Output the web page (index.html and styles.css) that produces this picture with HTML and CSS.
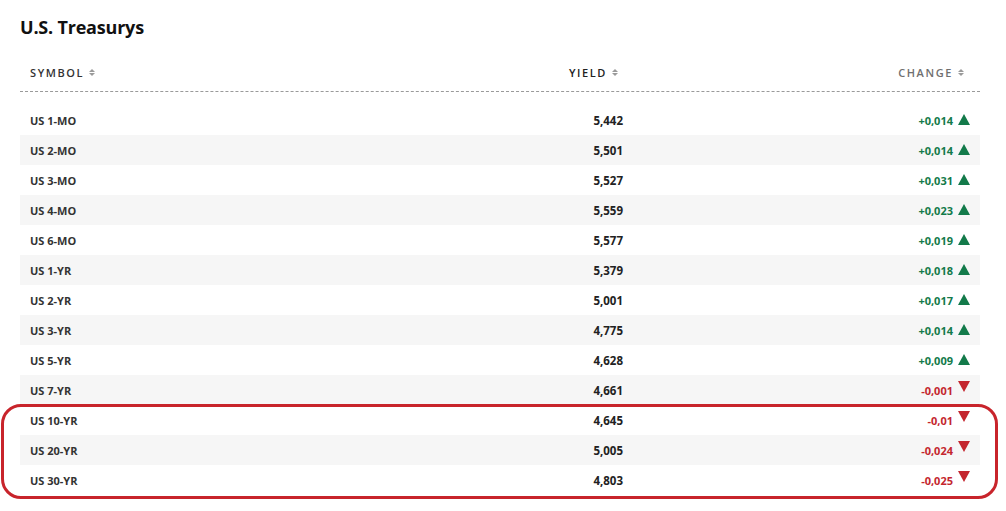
FILE: index.html
```html
<!DOCTYPE html>
<html>
<head>
<meta charset="utf-8">
<link rel="stylesheet" href="styles.css">
</head>
<body>
<div class="page">
  <h1 class="title">U.S. Treasurys</h1>
  <div class="table">
    <div class="row head">
      <div class="c sym">SYMBOL <span class="sort"><i class="su"></i><i class="sd"></i></span></div>
      <div class="c yld">YIELD <span class="sort"><i class="su"></i><i class="sd"></i></span></div>
      <div class="c chg">CHANGE <span class="sort"><i class="su"></i><i class="sd"></i></span></div>
    </div>
    <div class="row"><div class="c sym">US 1-MO</div><div class="c yld">5,442</div><div class="c chg up">+0,014 <i class="tri-up"></i></div></div>
    <div class="row alt"><div class="c sym">US 2-MO</div><div class="c yld">5,501</div><div class="c chg up">+0,014 <i class="tri-up"></i></div></div>
    <div class="row"><div class="c sym">US 3-MO</div><div class="c yld">5,527</div><div class="c chg up">+0,031 <i class="tri-up"></i></div></div>
    <div class="row alt"><div class="c sym">US 4-MO</div><div class="c yld">5,559</div><div class="c chg up">+0,023 <i class="tri-up"></i></div></div>
    <div class="row"><div class="c sym">US 6-MO</div><div class="c yld">5,577</div><div class="c chg up">+0,019 <i class="tri-up"></i></div></div>
    <div class="row alt"><div class="c sym">US 1-YR</div><div class="c yld">5,379</div><div class="c chg up">+0,018 <i class="tri-up"></i></div></div>
    <div class="row"><div class="c sym">US 2-YR</div><div class="c yld">5,001</div><div class="c chg up">+0,017 <i class="tri-up"></i></div></div>
    <div class="row alt"><div class="c sym">US 3-YR</div><div class="c yld">4,775</div><div class="c chg up">+0,014 <i class="tri-up"></i></div></div>
    <div class="row"><div class="c sym">US 5-YR</div><div class="c yld">4,628</div><div class="c chg up">+0,009 <i class="tri-up"></i></div></div>
    <div class="row alt"><div class="c sym">US 7-YR</div><div class="c yld">4,661</div><div class="c chg down">-0,001 <i class="tri-down"></i></div></div>
    <div class="row"><div class="c sym">US 10-YR</div><div class="c yld">4,645</div><div class="c chg down">-0,01 <i class="tri-down"></i></div></div>
    <div class="row alt"><div class="c sym">US 20-YR</div><div class="c yld">5,005</div><div class="c chg down">-0,024 <i class="tri-down"></i></div></div>
    <div class="row"><div class="c sym">US 30-YR</div><div class="c yld">4,803</div><div class="c chg down">-0,025 <i class="tri-down"></i></div></div>
  </div>
  <div class="highlight"></div>
</div>
</body>
</html>
```
FILE: styles.css
```css
html, body {
  margin: 0;
  padding: 0;
  background: #fff;
}
body {
  font-family: "Open Sans", "Liberation Sans", sans-serif;
  color: #333;
}
.page {
  position: relative;
  width: 1006px;
  height: 511px;
  padding: 0 26px 0 20px;
  box-sizing: border-box;
}
.title {
  margin: 0;
  padding-top: 15px;
  height: 47px;
  box-sizing: border-box;
  font-size: 18px;
  line-height: 24px;
  font-weight: 700;
  color: #111;
  letter-spacing: -0.2px;
}
.table {
  width: 960px;
}
.row {
  display: grid;
  grid-template-columns: 380px 223px 1fr;
  height: 30px;
  align-items: center;
  font-size: 11px;
  font-weight: 700;
}
.row.alt {
  background: #f6f6f6;
}
.row.head {
  height: 33px;
  margin-bottom: 13px;
  border-bottom: 1px dashed #9a9a9a;
  font-size: 11px;
  font-weight: 600;
  color: #6f6f6f;
  letter-spacing: 1.6px;
  align-items: end;
  padding-bottom: 11px;
  box-sizing: content-box;
}
.c {
  white-space: nowrap;
}
.sym {
  padding-left: 10px;
  color: #333;
}
.yld {
  text-align: right;
  color: #222;
  font-size: 11.5px;
}
.chg {
  display: flex;
  justify-content: flex-end;
  align-items: center;
  gap: 5px;
  padding-right: 10px;
}
.head .chg {
  padding-right: 16px;
  gap: 5px;
}
.head .sym, .head .yld {
  display: flex;
  align-items: center;
  gap: 5px;
}
.head .yld {
  justify-content: flex-end;
  padding-right: 5px;
  font-size: 11px;
}
.up { color: #137a4a; }
.down { color: #c4262e; }
.sort {
  display: inline-flex;
  flex-direction: column;
  gap: 1px;
}
.su, .sd {
  display: block;
  width: 0;
  height: 0;
  border-left: 3px solid transparent;
  border-right: 3px solid transparent;
}
.su { border-bottom: 3.5px solid #9a9a9a; }
.sd { border-top: 3.5px solid #9a9a9a; }
.tri-up {
  display: block;
  width: 0;
  height: 0;
  border-left: 6px solid transparent;
  border-right: 6px solid transparent;
  border-bottom: 11px solid #137a4a;
  margin-top: -2px;
}
.tri-down {
  display: block;
  width: 0;
  height: 0;
  border-left: 6px solid transparent;
  border-right: 6px solid transparent;
  border-top: 11px solid #c4262e;
  margin-top: -8px;
}
.highlight {
  position: absolute;
  left: 1px;
  top: 404px;
  width: 997px;
  height: 95px;
  box-sizing: border-box;
  border: 3px solid #c8242b;
  border-radius: 20px;
  pointer-events: none;
}
```
